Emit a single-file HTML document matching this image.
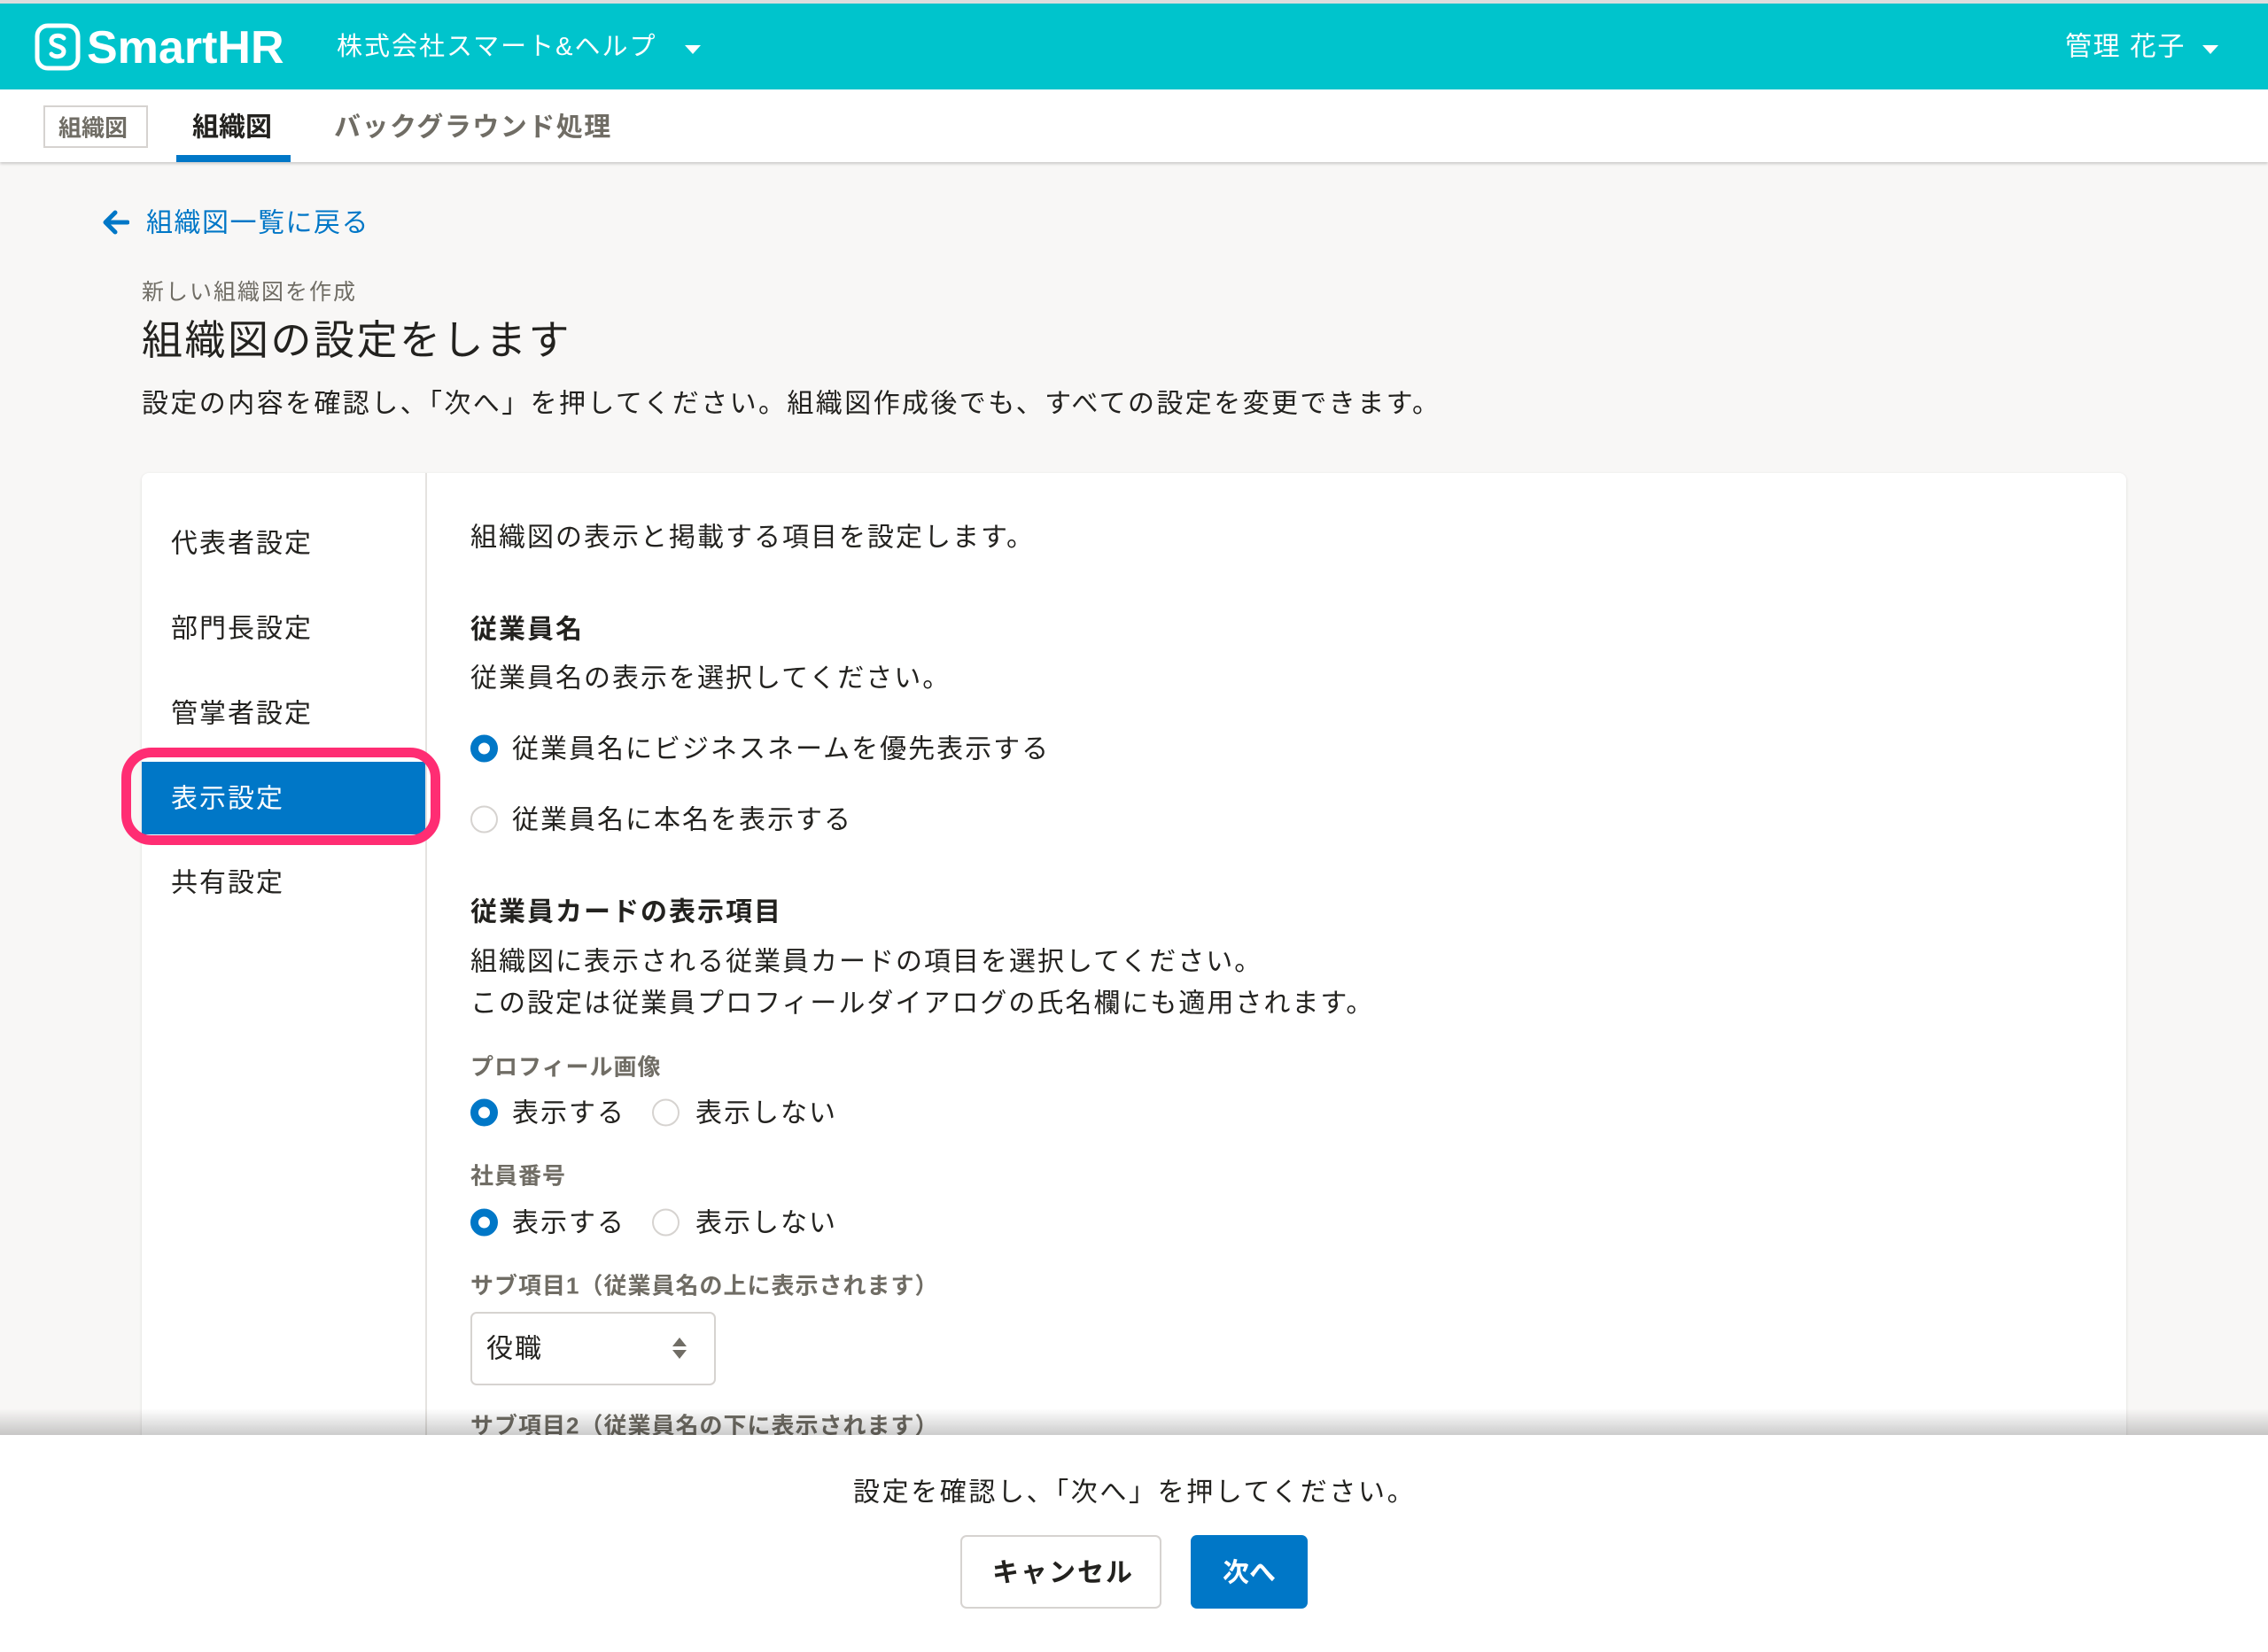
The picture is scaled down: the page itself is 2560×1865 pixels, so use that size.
<!DOCTYPE html>
<html><head><meta charset="utf-8"><style>
*{margin:0;padding:0;box-sizing:border-box}
body{width:2560px;height:1865px;position:relative;overflow:hidden;background:#f8f7f6;font-family:"Liberation Sans","Noto Sans CJK JP",sans-serif;color:#23221f}
.a{position:absolute;white-space:nowrap;line-height:1;transform:translateY(-48%)}
.r{position:absolute;width:31px;height:31px;border-radius:50%;transform:translateY(-50%)}
.on{border:9px solid #0077c7;background:#fff}
.off{border:2px solid #d6d3d0;background:#fff}
.t{font-size:30px;letter-spacing:2px}
.b{font-weight:bold}
.lbl{font-size:26px;font-weight:bold;color:#706d65;letter-spacing:1px}
</style></head><body>
<div style="position:absolute;left:0;top:0;width:2560px;height:4px;background:#ddd"></div>
<div style="position:absolute;left:0;top:4px;width:2560px;height:97px;background:#00c4cc"></div>
<svg style="position:absolute;left:39px;top:26px" width="52" height="54" viewBox="0 0 52 54"><rect x="3" y="3" width="46" height="48" rx="12" fill="none" stroke="#fff" stroke-width="5"/><path d="M33 17c-3-4-14-4-14 3s14 5 14 12-11 7-14 3" fill="none" stroke="#fff" stroke-width="5" stroke-linecap="round"/></svg>
<div class="a b" style="left:98px;top:53px;font-size:52px;color:#fff;letter-spacing:0px">SmartHR</div>
<div class="a" style="left:380px;top:53px;font-size:29px;color:#fff;letter-spacing:2px">株式会社スマート&amp;ヘルプ</div>
<div style="position:absolute;left:773px;top:51px;border-left:9px solid transparent;border-right:9px solid transparent;border-top:10px solid #fff"></div>
<div class="a" style="left:2331px;top:53px;font-size:30px;color:#fff;letter-spacing:1.5px">管理 花子</div>
<div style="position:absolute;left:2486px;top:51px;border-left:9px solid transparent;border-right:9px solid transparent;border-top:10px solid #fff"></div>

<div style="position:absolute;left:0;top:101px;width:2560px;height:82px;background:#fff;box-shadow:0 2px 3px rgba(0,0,0,.18)"></div>
<div style="position:absolute;left:49px;top:119px;width:118px;height:48px;border:2px solid #d6d3d0;background:#fff"></div>
<div class="a b" style="left:66px;top:144px;font-size:26px;color:#706d65">組織図</div>
<div class="a b" style="left:217px;top:144px;font-size:30px">組織図</div>
<div style="position:absolute;left:199px;top:175px;width:129px;height:8px;background:#0077c7"></div>
<div class="a b" style="left:377px;top:144px;font-size:30px;color:#706d65;letter-spacing:1.5px">バックグラウンド処理</div>

<svg style="position:absolute;left:116px;top:237px" width="30" height="28" viewBox="0 0 30 28"><path d="M14 3L3 14l11 11M3 14h25" fill="none" stroke="#0077c7" stroke-width="5" stroke-linecap="round" stroke-linejoin="round"/></svg>
<div class="a" style="left:165px;top:252px;font-size:30px;color:#0077c7;letter-spacing:1.5px">組織図一覧に戻る</div>
<div class="a" style="left:160px;top:330px;font-size:25px;color:#706d65;letter-spacing:2px">新しい組織図を作成</div>
<div class="a" style="left:160px;top:383px;font-size:46px;letter-spacing:2.5px">組織図の設定をします</div>
<div class="a t" style="left:160px;top:456px;letter-spacing:2.4px">設定の内容を確認し、「次へ」を押してください。組織図作成後でも、すべての設定を変更できます。</div>

<div style="position:absolute;left:160px;top:534px;width:2240px;height:1200px;background:#fff;border-radius:8px;box-shadow:0 1px 3px rgba(0,0,0,.12)"></div>
<div style="position:absolute;left:480px;top:534px;width:2px;height:1100px;background:#e5e3e0"></div>
<div class="a t" style="left:193px;top:614px">代表者設定</div>
<div class="a t" style="left:193px;top:710px">部門長設定</div>
<div class="a t" style="left:193px;top:806px">管掌者設定</div>
<div style="position:absolute;left:160px;top:860px;width:320px;height:82px;background:#0077c7"></div>
<div style="position:absolute;left:137px;top:844px;width:360px;height:110px;border:11px solid #ff2d73;border-radius:34px"></div>
<div class="a t" style="left:193px;top:902px;color:#fff">表示設定</div>
<div class="a t" style="left:193px;top:997px">共有設定</div>

<div class="a t" style="left:531px;top:607px">組織図の表示と掲載する項目を設定します。</div>
<div class="a t b" style="left:531px;top:711px">従業員名</div>
<div class="a t" style="left:531px;top:766px">従業員名の表示を選択してください。</div>
<div class="r on" style="left:531px;top:845px"></div>
<div class="a t" style="left:578px;top:846px">従業員名にビジネスネームを優先表示する</div>
<div class="r off" style="left:531px;top:925px"></div>
<div class="a t" style="left:578px;top:926px">従業員名に本名を表示する</div>
<div class="a t b" style="left:531px;top:1030px">従業員カードの表示項目</div>
<div class="a t" style="left:531px;top:1086px">組織図に表示される従業員カードの項目を選択してください。</div>
<div class="a t" style="left:531px;top:1133px">この設定は従業員プロフィールダイアログの氏名欄にも適用されます。</div>
<div class="a lbl" style="left:531px;top:1204px">プロフィール画像</div>
<div class="r on" style="left:531px;top:1256px"></div>
<div class="a t" style="left:578px;top:1257px">表示する</div>
<div class="r off" style="left:736px;top:1256px"></div>
<div class="a t" style="left:785px;top:1257px">表示しない</div>
<div class="a lbl" style="left:531px;top:1327px">社員番号</div>
<div class="r on" style="left:531px;top:1380px"></div>
<div class="a t" style="left:578px;top:1381px">表示する</div>
<div class="r off" style="left:736px;top:1380px"></div>
<div class="a t" style="left:785px;top:1381px">表示しない</div>
<div class="a lbl" style="left:531px;top:1451px">サブ項目1（従業員名の上に表示されます）</div>
<div style="position:absolute;left:531px;top:1481px;width:277px;height:83px;border:2px solid #d6d3d0;border-radius:7px;background:#fff"></div>
<div class="a t" style="left:549px;top:1523px">役職</div>
<div style="position:absolute;left:759px;top:1510px;border-left:8px solid transparent;border-right:8px solid transparent;border-bottom:10px solid #706d65"></div>
<div style="position:absolute;left:759px;top:1524px;border-left:8px solid transparent;border-right:8px solid transparent;border-top:10px solid #706d65"></div>
<div class="a lbl" style="left:531px;top:1609px">サブ項目2（従業員名の下に表示されます）</div>

<div style="position:absolute;left:0;top:1590px;width:2560px;height:30px;background:linear-gradient(rgba(0,0,0,0),rgba(0,0,0,.2))"></div>
<div style="position:absolute;left:0;top:1620px;width:2560px;height:245px;background:#fff"></div>
<div class="a t" style="left:963px;top:1685px;letter-spacing:2.6px">設定を確認し、「次へ」を押してください。</div>
<div style="position:absolute;left:1084px;top:1733px;width:227px;height:83px;border:2px solid #d6d3d0;border-radius:7px;background:#fff"></div>
<div class="a b" style="left:1120px;top:1776px;font-size:30px;letter-spacing:2px">キャンセル</div>
<div style="position:absolute;left:1344px;top:1733px;width:132px;height:83px;border-radius:7px;background:#0077c7"></div>
<div class="a b" style="left:1380px;top:1776px;font-size:30px;color:#fff">次へ</div>
</body></html>
